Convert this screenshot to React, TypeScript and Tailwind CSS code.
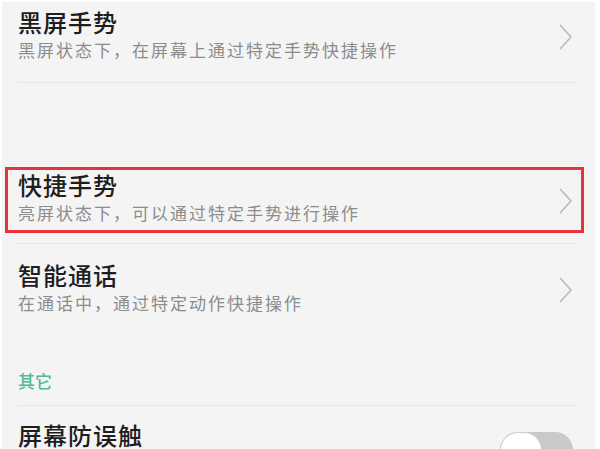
const FONT = { fontFamily: '"Noto Sans CJK SC", "Noto Sans", sans-serif' };

function Chevron() {
  return (
    <svg width="14" height="26" viewBox="0 0 14 26" fill="none" aria-hidden="true">
      <polyline points="1.5,1.5 12,13 1.5,24.5" stroke="#bdbdbd" strokeWidth="1.8" strokeLinejoin="round" strokeLinecap="round" />
    </svg>
  );
}

function RowText({ title, desc }: { title: string; desc: string }) {
  return (
    <div className="flex-1 min-w-0">
      <div className="text-[24px] leading-[28px] tracking-[1px] text-[#1e1e1e] font-medium">{title}</div>
      <div className="mt-[3px] text-[17px] leading-[22px] tracking-[2px] text-[#8c8c8c]">{desc}</div>
    </div>
  );
}

function Divider() {
  return <div className="ml-[16px] mr-[19px] h-px bg-[#e6e6e6]" />;
}

export default function App() {
  return (
    <div className="w-[600px] h-[449px] overflow-hidden bg-white pt-[2px] pl-[2px] pr-[5px]" style={FONT}>
      <div className="h-full bg-[#f4f4f4] overflow-hidden">
        {/* 黑屏手势 */}
        <div className="flex items-center pl-[16px] pr-[22px] pt-[6px] pb-[21px]">
          <RowText title="黑屏手势" desc="黑屏状态下，在屏幕上通过特定手势快捷操作" />
          <div className="mt-[4px]">
            <Chevron />
          </div>
        </div>
        <Divider />

        <div className="h-[84px]" />

        {/* 快捷手势 (highlighted) */}
        <div className="ml-[3px] mr-[11px] border-[3px] border-[#e8323c]">
          <div className="flex items-center pl-[10px] pr-[8px] pt-[1px] pb-[6px]">
            <RowText title="快捷手势" desc="亮屏状态下，可以通过特定手势进行操作" />
            <div className="mt-[6px]">
              <Chevron />
            </div>
          </div>
        </div>
        <div className="h-[10px]" />
        <Divider />

        {/* 智能通话 */}
        <div className="flex items-center pl-[16px] pr-[22px] pt-[17px] pb-[20px]">
          <RowText title="智能通话" desc="在通话中，通过特定动作快捷操作" />
          <div className="mt-[4px]">
            <Chevron />
          </div>
        </div>

        {/* 其它 */}
        <div className="pl-[16px] pt-[36px] pb-[14px] text-[17px] leading-[21px] font-medium text-[#52b996]">其它</div>
        <Divider />

        {/* 屏幕防误触 */}
        <div className="flex items-start pl-[16px] pr-[22px] pt-[15px]">
          <div className="flex-1 text-[24px] leading-[28px] tracking-[1px] text-[#1e1e1e] font-medium">屏幕防误触</div>
          <div className="mt-[11px] relative w-[73px] h-[36px] rounded-full bg-[#c9c9c9]">
            <div className="absolute left-0 top-0 w-[42px] h-[36px] rounded-full bg-white border border-[#cfcfcf]" />
          </div>
        </div>
      </div>
    </div>
  );
}
